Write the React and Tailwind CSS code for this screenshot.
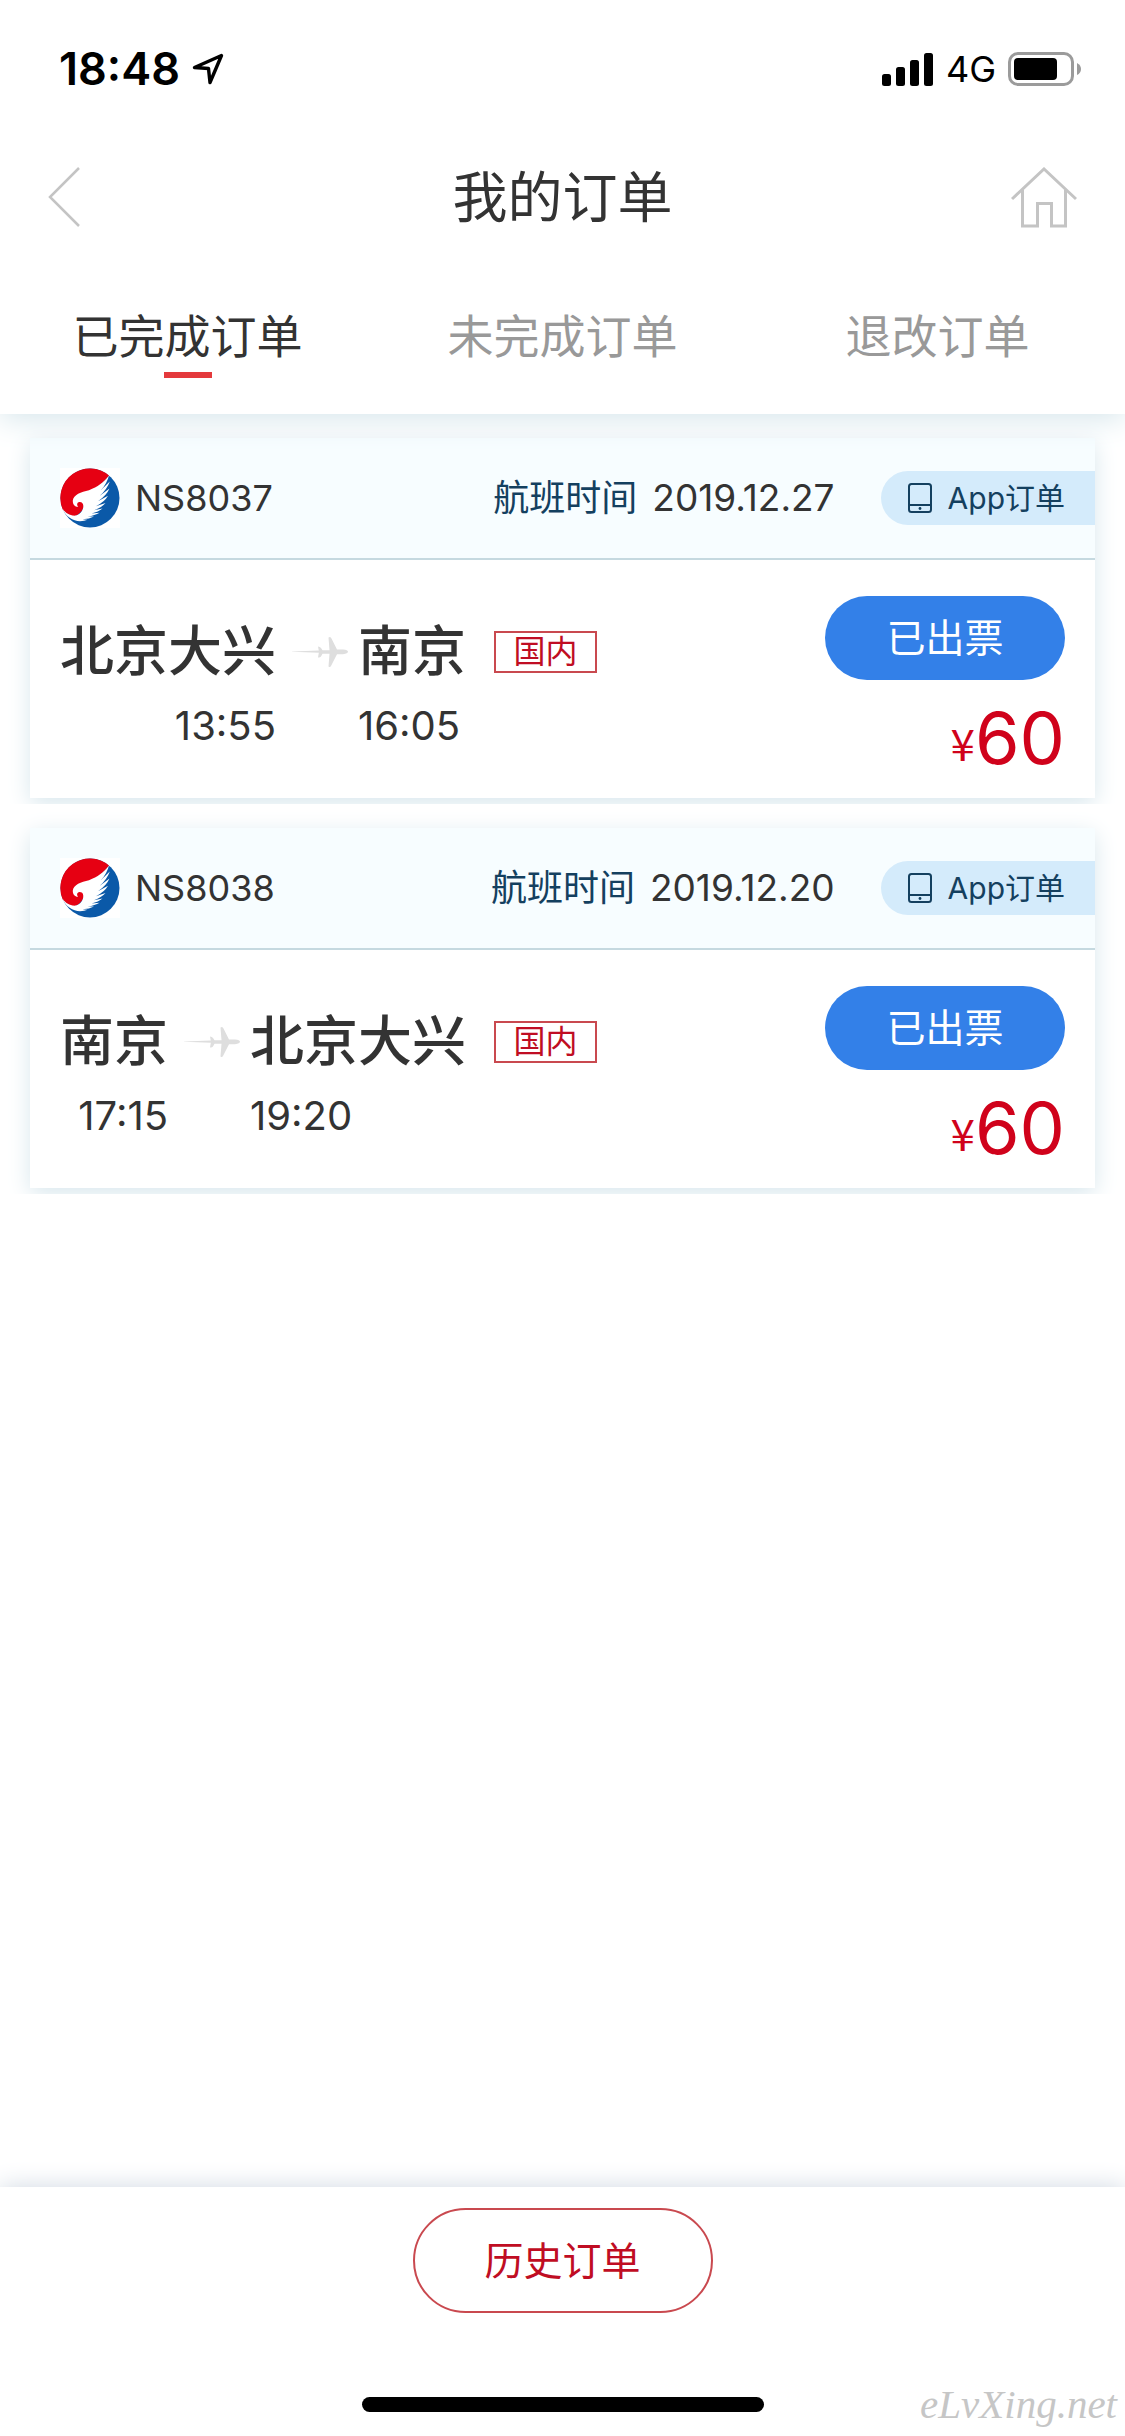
import { useState } from 'react'

const tabs = ['已完成订单', '未完成订单', '退改订单']

const orders = [
  { flight: 'NS8037', date: '2019.12.27', from: '北京大兴', to: '南京', depart: '13:55', arrive: '16:05', price: 60 },
  { flight: 'NS8038', date: '2019.12.20', from: '南京', to: '北京大兴', depart: '17:15', arrive: '19:20', price: 60 }
]

const StatusBar = () => (
  <div className="flex items-center justify-between h-[138px] pl-[59px] pr-[43px] text-black">
    <div className="flex items-center gap-3">
      <span className="text-[45px] leading-[44px] font-semibold">18:48</span>
      <svg className="w-8 h-8" viewBox="0 0 32 32" fill="none" stroke="currentColor" strokeWidth="3.4" strokeLinejoin="round">
        <path d="M29.500 2.500L2.500 14.500L16.500 15.500L18 29.500Z" />
      </svg>
    </div>
    <div className="flex items-center">
      <svg className="w-[52px] h-[33px]" viewBox="0 0 52 33" fill="currentColor">
        <rect x="0" y="21" width="9" height="12" rx="2.500" />
        <rect x="14" y="14" width="9" height="19" rx="2.500" />
        <rect x="28" y="7" width="9" height="26" rx="2.500" />
        <rect x="42" y="0" width="9" height="33" rx="2.500" />
      </svg>
      <span className="ml-3 mr-3 text-[36px] leading-[44px]">4G</span>
      <svg className="w-[74px] h-[34px]" viewBox="0 0 74 34">
        <rect x="1.5" y="1.5" width="63" height="31" rx="8.5" fill="none" stroke="#9b9b9b" strokeWidth="3" />
        <rect x="6" y="6" width="43" height="22" rx="4" fill="#000" />
        <path d="M69 11Q73 13 73 17Q73 21 69 23Z" fill="#9b9b9b" />
      </svg>
    </div>
  </div>
)

const AirlineLogo = () => (
  <svg className="w-[60px] h-[60px]" viewBox="0 0 60 60">
    <rect width="60" height="60" fill="#fff" />
    <circle cx="30" cy="30" r="29.500" fill="#0b59a8" />
    <path d="M49 7.500A29.500 29.500 0 0 0 2.500 41C5 45 10 48.500 15 48C20 46 23.500 42 24 36C22 31 23 27 28 25C38 20 44 14 49 7.500Z" fill="#e60012" />
    <path
      d="M49 7.500C43 15 38 18.500 29 22.200C21 24 13.500 26.500 12.800 32.500C12.600 36.500 15 39 18.300 38.800C16.500 37.500 16.700 34.300 19.500 34C22.800 33.800 24 36.800 23 40.500C21.500 45.500 17 48.300 12.500 47.500C8 46.500 4.500 44 2 40C5.500 48.500 13 53.200 20 53.200C23 53.200 25.500 52.600 27.500 51.800L22.500 51.300Q29.500 51 34 48.600L27.500 48.600Q35 47.500 39.500 44.800L31.500 45.600Q38.500 44 42.500 40.600L34 42.300Q41.500 39.500 45.500 35L36 38.200Q44.500 34 48 27.800L38 33.200Q46.500 27.500 49.500 20.500L39.500 28Q47 21.500 49.800 13.500L41 22Q47 15.500 49 7.500Z"
      fill="#fff"
    />
  </svg>
)

const PlaneIcon = () => (
  <svg className="w-14 h-[34px]" viewBox="0 0 56 34" fill="#dedede">
    <path d="M0 16.500L27 15.600V17.800L0 16.800Z" />
    <path d="M26 11.500Q28 11.500 29 13L30.500 15.200H37.500L36.500 2.500Q38.500 1 39.500 3.500L45 14.500H51Q56 15 56 16.800Q56 18.500 51 19.300H45L39.500 30Q38.500 33 36.500 31.500L37.500 18.800H30.500L29 21.500Q28 22.800 26 22.500L27 16.800Z" />
  </svg>
)

const OrderCard = ({ order }) => (
  <li className="overflow-hidden px-[30px] pt-6 pb-1.5">
    <article className="bg-white shadow-[0_6px_22px_#d8e7ed]">
      <div className="flex items-center h-[122px] pl-[30px] bg-[#f7fdff] border-b-2 border-[#c5d9e0] text-[36px] leading-[44px] text-[#333]">
        <AirlineLogo />
        <span className="ml-[15px]">{order.flight}</span>
        <span className="ml-auto text-[#14405f]">航班时间</span>
        <span className="ml-[15px] text-[37px]">{order.date}</span>
        <span className="flex items-center h-[54px] ml-[46px] pl-[27px] pr-[30px] rounded-l-full bg-[#d4ebfb] text-[30px] text-[#14405f]">
          <svg className="w-6 h-[30px] mr-4" viewBox="0 0 24 30" fill="none" stroke="currentColor" strokeWidth="2">
            <rect x="1" y="1" width="22" height="28" rx="2.500" />
            <path d="M1 22H23" />
            <circle cx="12" cy="25.500" r="1.400" fill="currentColor" stroke="none" />
          </svg>
          App订单
        </span>
      </div>
      <div className="flex items-start justify-between h-[238px] px-[30px]">
        <div className="flex items-start pt-[60px] text-[#333]">
          <div className="text-right">
            <p className="text-[54px] leading-[64px] font-medium">{order.from}</p>
            <p className="mt-5 text-[40px] leading-[44px]">{order.depart}</p>
          </div>
          <div className="flex items-center h-[64px] ml-4 mr-2.5">
            <PlaneIcon />
          </div>
          <div>
            <p className="text-[54px] leading-[64px] font-medium">{order.to}</p>
            <p className="mt-5 text-[40px] leading-[44px]">{order.arrive}</p>
          </div>
          <div className="flex items-center h-[64px] ml-7">
            <span className="flex items-center justify-center w-[103px] h-[42px] border-2 border-[#c9494f] text-[32px] text-[#c00d23]">国内</span>
          </div>
        </div>
        <div className="flex flex-col items-end pt-9">
          <button type="button" className="w-60 h-[84px] rounded-full bg-[#3380e8] text-white text-[39px] leading-[44px] cursor-pointer">
            已出票
          </button>
          <p className="flex items-end mt-3.5 text-[#d0021b] text-[72px] leading-[88px]">
            <span className="pb-2 text-[44px] leading-[64px] font-['Noto_Sans_CJK_SC',sans-serif]">¥</span>
            {order.price}
          </p>
        </div>
      </div>
    </article>
  </li>
)

const App = () => {
  const [activeTab, setActiveTab] = useState(0)

  return (
    <div className="relative flex flex-col min-h-screen bg-white font-[Inter,'Noto_Sans_CJK_SC',sans-serif]">
      <header className="relative z-10 bg-white shadow-[0_4px_30px_#d3e4ea]">
        <StatusBar />
        <div className="flex items-center justify-between h-[118px] px-12">
          <button type="button" aria-label="返回" className="w-[66px] cursor-pointer">
            <svg className="w-8 h-[60px]" viewBox="0 0 32 60" fill="none" stroke="#c4c4c4" strokeWidth="2.500">
              <path d="M31 1L2 30L31 59" />
            </svg>
          </button>
          <h1 className="text-[55px] leading-[64px] text-[#333]">我的订单</h1>
          <button type="button" aria-label="首页" className="w-[66px] cursor-pointer">
            <svg className="w-[66px] h-[61px]" viewBox="0 0 66 61" fill="none" stroke="#c4c4c4" strokeWidth="3">
              <path d="M1 32L33 2L65 32" />
              <path d="M11.500 23V59H26.500V36.500H40.500V59H54.500V23" />
            </svg>
          </button>
        </div>
        {/* Order type tabs */}
        <nav className="flex h-[158px] pt-12">
          {tabs.map((tab, index) => (
            <button
              key={tab}
              type="button"
              onClick={() => setActiveTab(index)}
              className={`flex flex-1 flex-col items-center text-[46px] leading-[64px] cursor-pointer ${
                activeTab === index ? 'text-[#333]' : 'text-[#999]'
              }`}
            >
              {tab}
              {activeTab === index && <span className="w-12 h-1.5 mt-1 bg-[#e4393c]" />}
            </button>
          ))}
        </nav>
      </header>

      <main className="flex-1">
        <ul>
          {orders.map((order) => (
            <OrderCard key={order.flight} order={order} />
          ))}
        </ul>
      </main>

      <footer className="flex flex-col items-center bg-white pt-[21px] pb-6 shadow-[0_0_24px_#d0d8e2]">
        <button type="button" className="w-[300px] h-[105px] rounded-full border-2 border-[#c9494f] text-[39px] leading-[44px] text-[#c00d23] cursor-pointer">
          历史订单
        </button>
        <div className="w-[402px] h-[15px] mt-[84px] rounded-full bg-black" />
      </footer>
      <span className="absolute right-2 bottom-2 text-[41px] leading-[48px] italic text-[#c6c6c6] font-['Liberation_Serif',serif]">eLvXing.net</span>
    </div>
  )
}

export default App
